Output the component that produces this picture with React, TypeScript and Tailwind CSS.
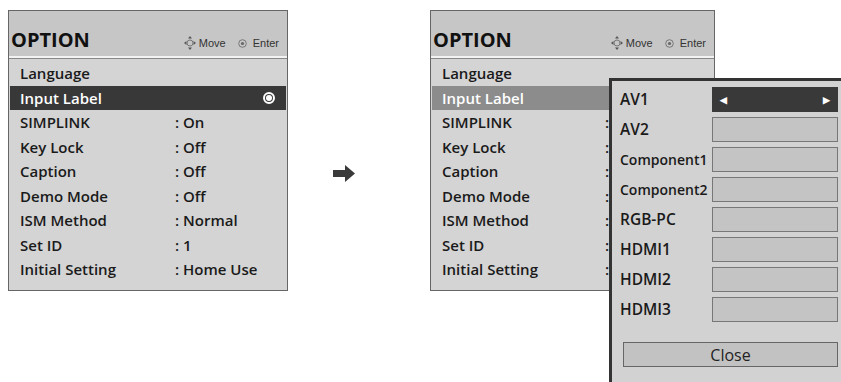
const rows: [string, string][] = [
  ["Language", ""],
  ["Input Label", ""],
  ["SIMPLINK", ": On"],
  ["Key Lock", ": Off"],
  ["Caption", ": Off"],
  ["Demo Mode", ": Off"],
  ["ISM Method", ": Normal"],
  ["Set ID", ": 1"],
  ["Initial Setting", ": Home Use"],
];

const inputs = ["AV1", "AV2", "Component1", "Component2", "RGB-PC", "HDMI1", "HDMI2", "HDMI3"];

function MoveIcon() {
  return (
    <svg width="12" height="14" viewBox="0 0 12 14" className="mr-[3px]">
      <path d="M6 0 L8 2.5 H4 Z M6 14 L8 11.5 H4 Z M0 7 L2.5 5 V9 Z M12 7 L9.5 5 V9 Z" fill="#555" />
      <circle cx="6" cy="7" r="3" fill="none" stroke="#777" strokeWidth="1" />
    </svg>
  );
}

function EnterIcon() {
  return (
    <svg width="9" height="9" viewBox="0 0 9 9" className="mr-[6px]">
      <circle cx="4.5" cy="4.5" r="3.8" fill="none" stroke="#777" strokeWidth="1" />
      <circle cx="4.5" cy="4.5" r="1.6" fill="#666" />
    </svg>
  );
}

function OptionMenu({ width, covered }: { width: string; covered?: boolean }) {
  return (
    <div className={`${width} flex flex-col border border-[#666] bg-[#cfcfcf]`}>
      <div className="flex items-end justify-between h-[47px] px-[2px] pb-[6px] bg-[#c6c6c6] border-b-2 border-[#f2f2f2]">
        <span className="text-[20px] font-bold leading-none text-[#111]">OPTION</span>
        <span className="flex items-center text-[11px] font-normal text-[#333] leading-none pr-[6px] font-['Liberation_Sans',sans-serif]">
          <MoveIcon />
          <span className="mr-[12px]">Move</span>
          <EnterIcon />
          <span>Enter</span>
        </span>
      </div>
      <div className="flex flex-col pt-[2px] pb-[8px] bg-[#d4d4d4] border-t border-[#888]">
        {rows.map(([label, value]) => {
          const selected = label === "Input Label";
          const bg = selected ? (covered ? "bg-[#8c8c8c] text-white" : "bg-[#383838] text-white") : "text-[#1a1a1a]";
          return (
            <div key={label} className={`flex items-center h-[24.5px] mx-[1px] pl-[10px] ${bg}`}>
              <span className="w-[155px] shrink-0">{label}</span>
              <span className={covered ? "pl-[8px]" : ""}>{covered ? (value ? ":" : "") : value}</span>
              {selected && !covered && (
                <span className="ml-auto mr-[11px] w-[12px] h-[12px] rounded-full border-2 border-white flex items-center justify-center">
                  <span className="w-[6px] h-[6px] rounded-full bg-white" />
                </span>
              )}
            </div>
          );
        })}
      </div>
    </div>
  );
}

function InputLabelPopup() {
  return (
    <div className="absolute left-[609px] top-[78px] w-[232px] h-[320px] bg-[#d2d2d2] border-l-[3px] border-t-[3px] border-[#333] pt-[6px] pl-[8px]">
      <div className="flex flex-col gap-[5px]">
        {inputs.map((name, i) => (
          <div key={name} className="flex items-center h-[25px]">
            <span className={`w-[92px] ${name.startsWith("Component") ? "text-[14px]" : "text-[15.5px]"}`}>{name}</span>
            {i === 0 ? (
              <div className="flex-1 h-[25px] bg-[#393939] flex items-center justify-between px-[8px] text-white text-[9px] mr-[3px]">
                <span>◀</span>
                <span>▶</span>
              </div>
            ) : (
              <div className="flex-1 h-[25px] bg-[#c4c4c4] border border-[#777] mr-[3px]" />
            )}
          </div>
        ))}
      </div>
      <div className="mt-[20px] ml-[3px] mr-[3px] h-[25px] bg-[#c2c2c2] border border-[#666] flex items-center justify-center text-[16px] font-normal text-[#222]">
        Close
      </div>
    </div>
  );
}

export default function App() {
  return (
    <div className="relative w-[841px] h-[382px] bg-white overflow-hidden font-['Open_Sans',sans-serif] font-semibold text-[15px] text-[#1a1a1a]">
      <div className="flex items-start pt-[10px] pl-[8px]">
        <OptionMenu width="w-[280px]" />
        <div className="w-[142px] pt-[155px] pl-[45px]">
          <svg width="22" height="17" viewBox="0 0 22 17">
            <path d="M0 5 H12 V0 L22 8.5 L12 17 V12 H0 Z" fill="#3a3a3a" />
          </svg>
        </div>
        <OptionMenu width="w-[285px]" covered />
      </div>
      <InputLabelPopup />
    </div>
  );
}
